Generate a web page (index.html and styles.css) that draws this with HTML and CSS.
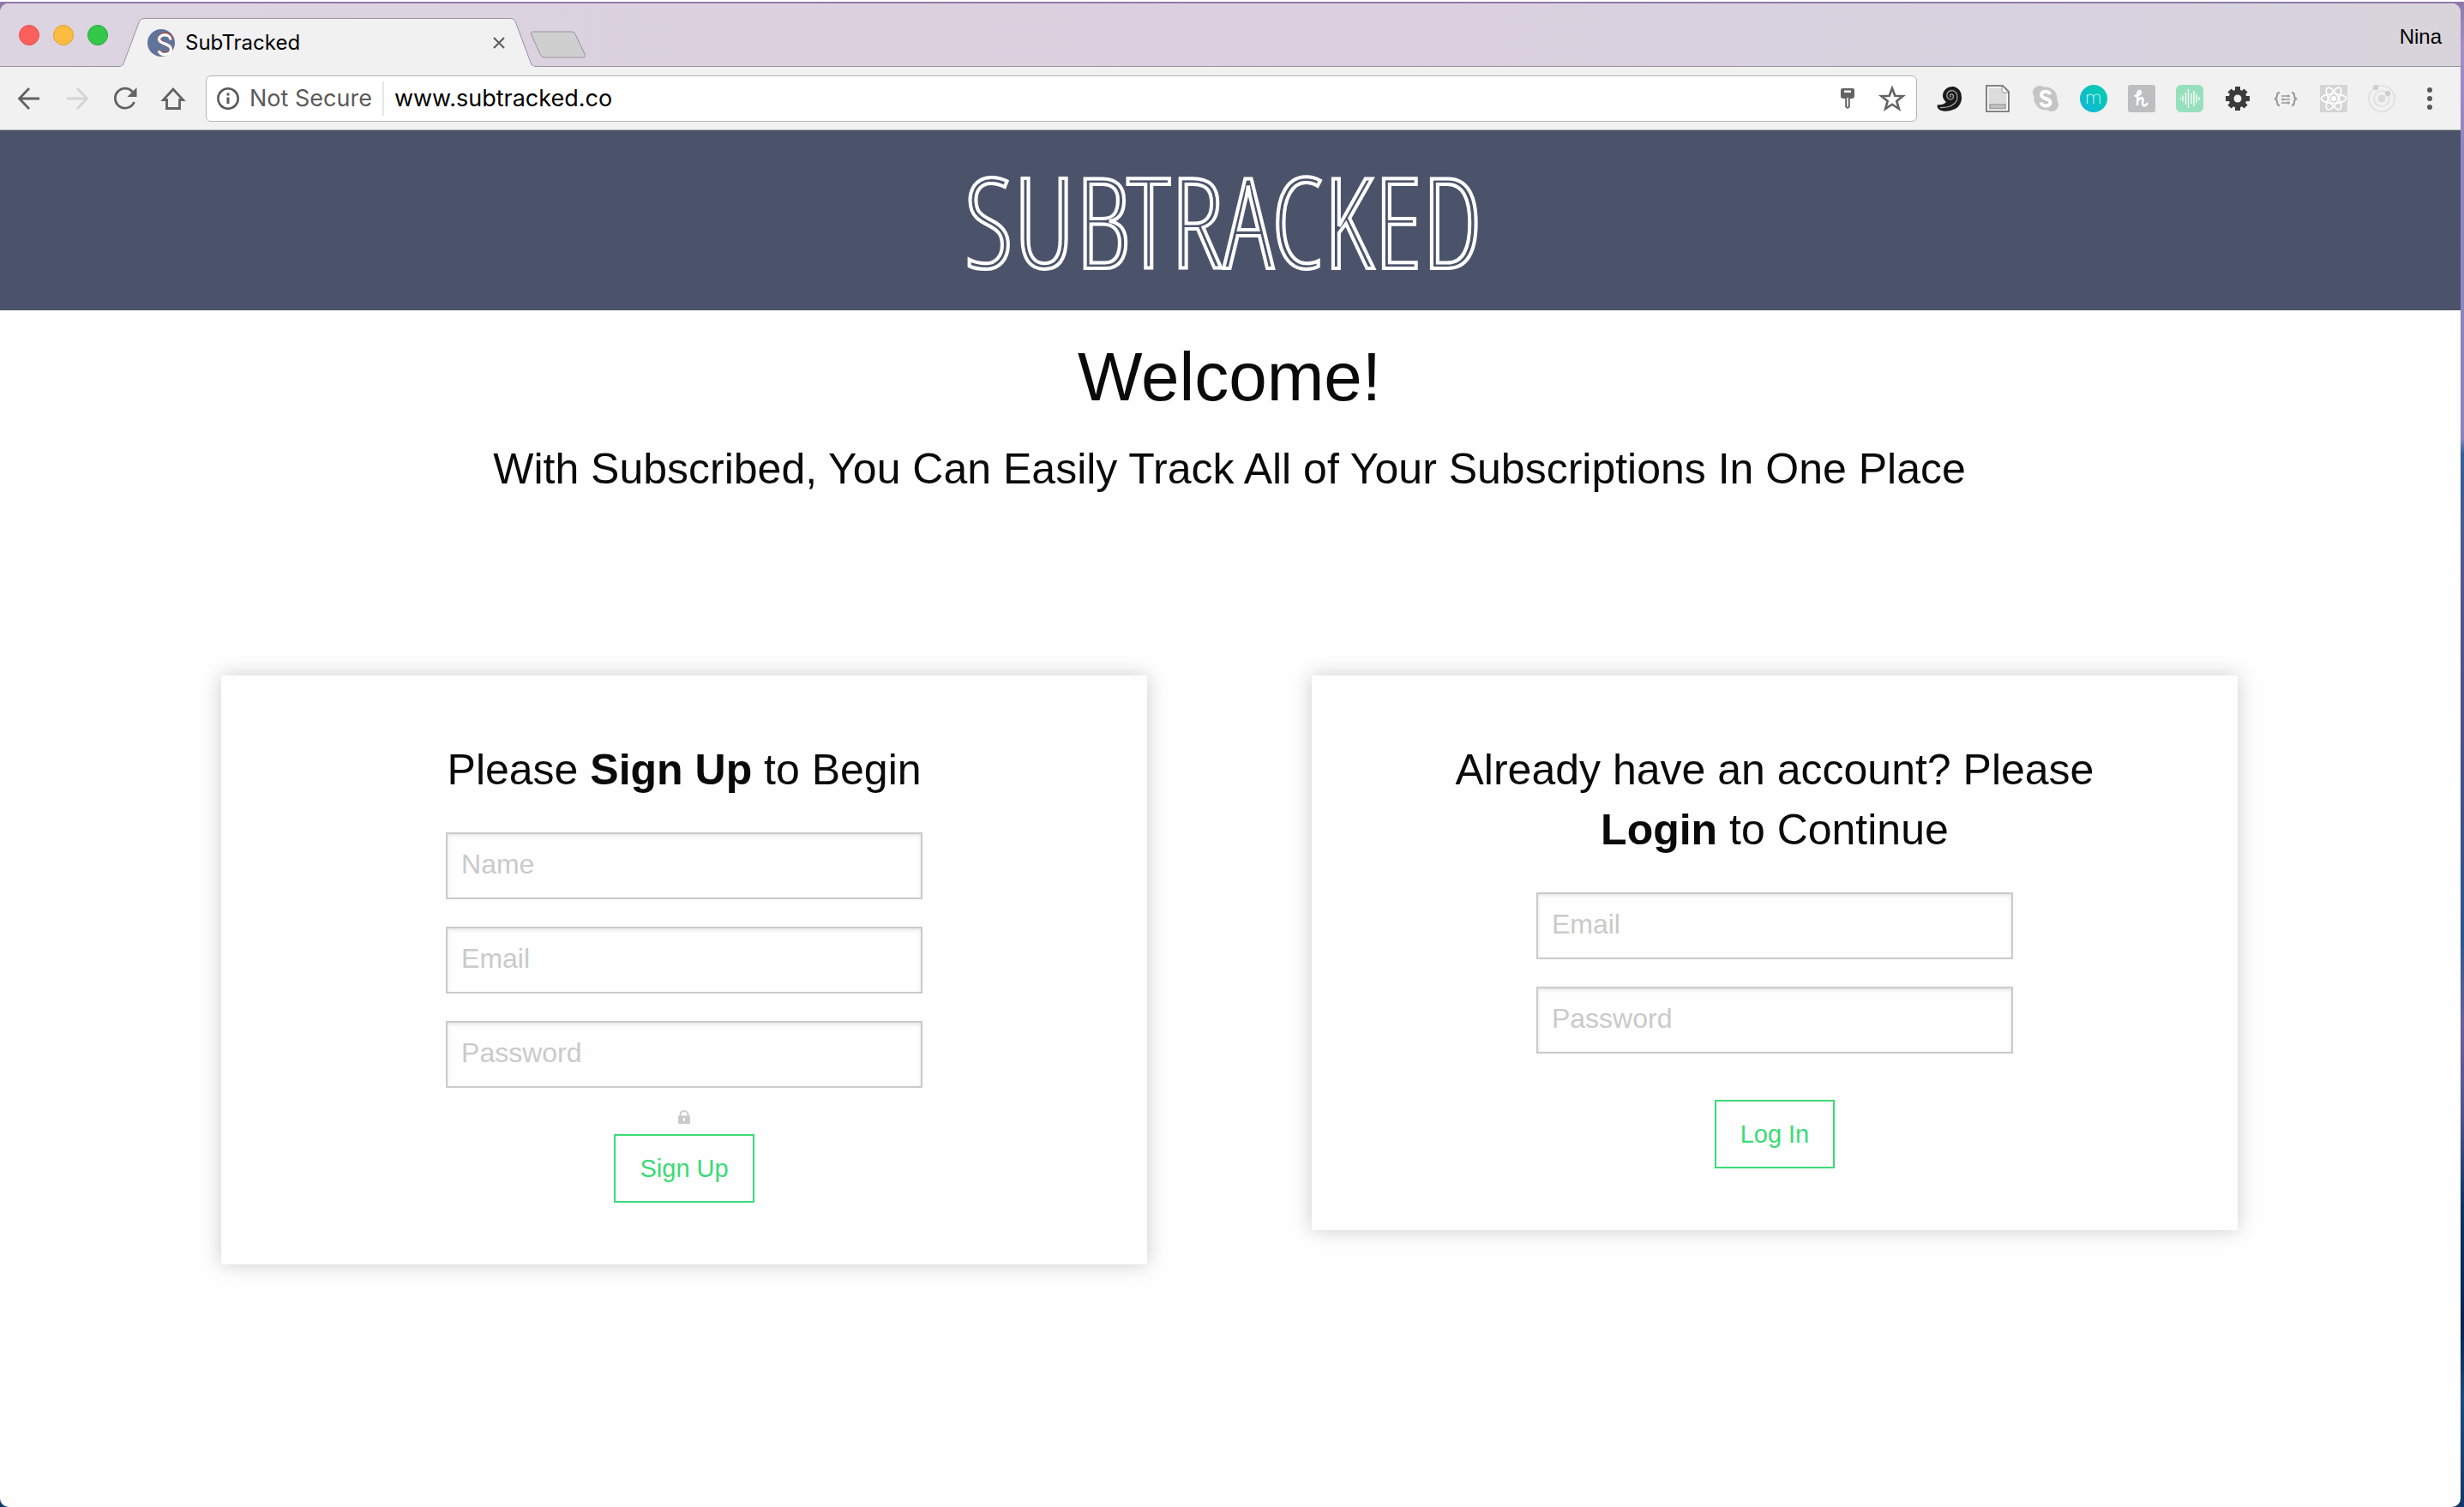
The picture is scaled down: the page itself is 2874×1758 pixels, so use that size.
FILE: index.html
```html
<!DOCTYPE html>
<html lang="en">
<head>
<meta charset="utf-8">
<title>SubTracked</title>
<link rel="stylesheet" href="styles.css">
</head>
<body>
<div class="desktop">
<div class="window">
  <div class="titlebar">
    <div class="lights"><span class="light red"></span><span class="light amber"></span><span class="light green"></span></div>
    <div class="tab">
      <svg class="tab-shape" viewBox="0 0 484 57"><path d="M0 56.500C3 56.500 3.500 55 4.500 52L22.500 4Q24 .5 28 .5H456Q459.500 .5 461 4L479 52C480 55 481 56.500 484 56.500V58H0Z" fill="#f1f1f1" stroke="#98919c"/><path d="M1 57h482" stroke="#f1f1f1" stroke-width="2"/></svg>
      <svg class="icon" viewBox="0 0 32 32"><circle cx="16" cy="16" r="16" fill="#60749a"/><path d="M28 12C28 3.500 14 3.500 14 11.500C14 17 27 17 27 23.500C27 30.500 13.500 30.500 13.500 24" fill="none" stroke="#a04a48" stroke-width="4"/><path d="M27 12.500C27 5 13.500 5 13.500 12C13.500 17.500 27.500 16.500 27.500 23.500C27.500 31.500 13.500 31 13.500 25" fill="none" stroke="#fff" stroke-width="3.400"/></svg>
      <span class="tab-title">SubTracked</span>
      <button class="plain" aria-label="Close tab"><svg class="close" viewBox="0 0 16 16"><path d="M2 2l12 12M14 2L2 14" stroke="#5a5a5a" stroke-width="2"/></svg></button>
    </div>
    <button class="plain new-tab" aria-label="New tab"><svg viewBox="0 0 66 32"><path d="M4 1H49Q52 1 53 4L64 27Q65.500 31 62 31H18Q14 31 12.500 28L1.500 4Q.5 1 4 1Z" fill="#cfcfcf" stroke="#98919c"/></svg></button>
    <span class="profile">Nina</span>
  </div>
  <div class="toolbar">
    <nav class="nav">
      <button class="plain" aria-label="Back"><svg class="icon" viewBox="0 0 32 32" fill="none" stroke="#636363" stroke-width="2.800"><path d="M28 16H5M16 4L4.500 16L16 28"/></svg></button>
      <button class="plain" aria-label="Forward"><svg class="icon" viewBox="0 0 32 32" fill="none" stroke="#d4d4d4" stroke-width="2.800"><path d="M4 16H27M16 4L27.500 16L16 28"/></svg></button>
      <button class="plain" aria-label="Reload"><svg class="icon" viewBox="0 0 32 32"><path d="M26.500 20A11.500 11.500 0 1 1 24.500 8" fill="none" stroke="#636363" stroke-width="2.800"/><path d="M29.500 3V14H18.500Z" fill="#636363"/></svg></button>
      <button class="plain" aria-label="Home"><svg class="icon" viewBox="0 0 32 32" fill="none" stroke="#636363" stroke-width="2.800"><path d="M16 5L4.500 17.500H8.500V27.500H23.500V17.500H27.500Z"/></svg></button>
    </nav>
    <div class="omnibox">
      <svg class="info" viewBox="0 0 26 26"><circle cx="13" cy="13" r="11.700" fill="none" stroke="#5a5a5a" stroke-width="2.600"/><path d="M13 11.500V19M13 6.500V9.500" stroke="#5a5a5a" stroke-width="3"/></svg>
      <span class="security">Not Secure</span>
      <input class="url" type="text" aria-label="Address" value="www.subtracked.co">
      <button class="plain" aria-label="Saved password"><svg class="icon" viewBox="0 0 32 32"><path d="M10 4H22Q24 4 24 6V13Q24 16 21 16H11Q8 16 8 13V6Q8 4 10 4Z" fill="#636363"/><path d="M12 6.500h8v2.500h-8z" fill="#fff"/><path d="M14.200 15V25.500Q16 28 17.800 25.500V15" fill="#fff" stroke="#636363" stroke-width="2"/></svg></button>
      <button class="plain" aria-label="Bookmark"><svg class="icon" viewBox="0 0 32 32"><path d="M16 4L19.300 12.800L28.500 13.100L21.300 18.900L23.900 28L16 22.700L8.100 28L10.700 18.900L3.500 13.100L12.700 12.800Z" fill="none" stroke="#636363" stroke-width="2.600"/></svg></button>
    </div>
    <div class="extensions">
      <svg class="icon" viewBox="0 0 32 32"><path d="M2 23Q8 24 12 20Q6 15 9 8Q13 1 21 2Q31 5 30 17Q28 28 17 30Q7 32 3 28Q1 26 2 23Z" fill="#1b1b1b"/><path d="M18 14Q16 14 16.500 12Q18.500 9.500 20.500 12.500Q20.500 17 16.500 17Q12 15.500 13 10.500Q15.500 5.500 21 7Q26.500 10.500 24.500 18Q20 27 5 26.500" fill="none" stroke="#b0b0b0" stroke-width="1.200"/></svg>
      <svg class="icon" viewBox="0 0 32 32"><path d="M3 1H22L29 8V31H3Z" fill="#fff" stroke="#828282" stroke-width="2"/><path d="M5.500 3.500H20V10H26.500V28.500H5.500Z" fill="#dcdcdc"/><path d="M21 2V9H28" fill="none" stroke="#828282"/><path d="M7 23H25V27.500H7Z" fill="#c4c4c4" stroke="#a0a0a0" stroke-width="1.500"/></svg>
      <svg class="icon" viewBox="0 0 32 32"><circle cx="16" cy="16" r="13.500" fill="#c5c5c5"/><circle cx="9" cy="9" r="8" fill="#c5c5c5"/><circle cx="23" cy="23" r="8" fill="#c5c5c5"/><path d="M21 11C20 6.500 11 6.500 11 11.500C11 17 21.500 15 21.500 20.500C21.500 26 11 25.500 10.500 20.500" fill="none" stroke="#fff" stroke-width="4"/></svg>
      <svg class="icon" viewBox="0 0 32 32"><defs><linearGradient id="teal" x1="0" y1="1" x2="1" y2="0"><stop offset="0" stop-color="#10b4dc"/><stop offset="1" stop-color="#06cfa8"/></linearGradient></defs><circle cx="16" cy="16" r="16" fill="url(#teal)"/><path d="M8.500 22V11M8.500 15Q9 11 12.500 11Q16 11 16 15V22M16 15Q16.500 11 20 11Q23.500 11 23.500 15V22" fill="none" stroke="#a9f0ee" stroke-width="1.200"/></svg>
      <svg class="icon" viewBox="0 0 32 32"><rect width="32" height="32" rx="3" fill="#bdbec0"/><path d="M7.500 13Q15 12 15 8.500Q14 5.500 11.500 8.500L11 24M11 19Q14 14.500 17 15.500Q18 17 17 21Q17 25 20 24Q22 23 23 21" fill="none" stroke="#fff" stroke-width="2.600"/></svg>
      <svg class="icon" viewBox="0 0 32 32"><rect width="32" height="32" rx="6" fill="#97e0bd"/><path d="M5.500 15V17M8 12.500V19.500M11.500 9V23M14.500 5V27M18 10V22M21 7V25M24 11V21M27 14V18" stroke="#fff" stroke-width="1.300"/></svg>
      <svg class="icon" viewBox="0 0 32 32"><g stroke="#3c3c3c" stroke-width="6"><path d="M16 2V30M2 16H30M6.500 6.500L25.500 25.500M25.500 6.500L6.500 25.500"/></g><circle cx="16" cy="16" r="10.500" fill="#3c3c3c"/><circle cx="16" cy="16" r="4.500" fill="#f1f1f1"/></svg>
      <svg class="icon" viewBox="0 0 32 32" fill="none" stroke="#999" stroke-width="2"><path d="M9 9Q6 9 6 12Q6 16 3 16Q6 17 6 20Q6 24 9 24M23 9Q26 9 26 12Q26 16 29 16Q26 17 26 20Q26 24 23 24"/><path d="M11 13H21M11 17H21M11 21H21" stroke-width="1.400"/><path d="M19 11.500V14.500M13 15.500V18.500M19 19.500V22.500" stroke-width="1.400"/></svg>
      <svg class="icon" viewBox="0 0 32 32"><rect width="32" height="32" fill="#d5d5d5"/><g fill="none" stroke="#fff" stroke-width="1.700"><ellipse cx="16" cy="16" rx="14.500" ry="5.500"/><ellipse cx="16" cy="16" rx="14.500" ry="5.500" transform="rotate(60 16 16)"/><ellipse cx="16" cy="16" rx="14.500" ry="5.500" transform="rotate(120 16 16)"/></g><circle cx="16" cy="16" r="3" fill="#fff"/></svg>
      <svg class="icon" viewBox="0 0 32 32"><g fill="none" stroke="#dfdfdf" stroke-width="1.700"><circle cx="16" cy="16" r="15"/><circle cx="16" cy="16" r="9"/></g><circle cx="16" cy="16" r="4.500" fill="#dadada"/><circle cx="9" cy="3" r="3.200" fill="#cfcfcf"/><circle cx="23" cy="10" r="3.200" fill="#cfcfcf"/></svg>
      <button class="plain" aria-label="Menu"><svg class="icon" viewBox="0 0 32 32" fill="#5a5a5a"><circle cx="16" cy="6" r="3"/><circle cx="16" cy="16" r="3"/><circle cx="16" cy="26" r="3"/></svg></button>
    </div>
  </div>
  <div class="page">
    <header class="brand"><span class="wordmark">SUBTRACKED</span></header>
    <main>
      <h1>Welcome!</h1>
      <h2>With Subscribed, You Can Easily Track All of Your Subscriptions In One Place</h2>
      <div class="panels">
        <form class="panel">
          <h2>Please <strong>Sign Up</strong> to Begin</h2>
          <div class="fields">
            <input type="text" placeholder="Name" aria-label="Name">
            <input type="email" placeholder="Email" aria-label="Email">
            <input type="password" placeholder="Password" aria-label="Password">
          </div>
          <div class="hint"><svg viewBox="0 0 16 16"><path d="M3.500 7V5.500A4.500 4.500 0 0 1 12.500 5.500V7" fill="none" stroke="#cbcbcb" stroke-width="2"/><rect x="1" y="6.500" width="14" height="9.500" rx="1" fill="#cbcbcb"/><path d="M8 9v4" stroke="#fdfdfd" stroke-width="2"/></svg></div>
          <button class="action" type="button">Sign Up</button>
        </form>
        <form class="panel">
          <h2>Already have an account? Please <strong>Login</strong> to Continue</h2>
          <div class="fields">
            <input type="email" placeholder="Email" aria-label="Email">
            <input type="password" placeholder="Password" aria-label="Password">
          </div>
          <div class="hint"></div>
          <button class="action" type="button">Log In</button>
        </form>
      </div>
    </main>
  </div>
</div>
</div>
</body>
</html>
```
FILE: styles.css
```css
* { box-sizing: border-box; }

body {
  margin: 0;
  background: #fff;
  font-family: "Liberation Sans", Arial, sans-serif;
  color: #0a0a0a;
}

.desktop {
  display: flex;
  min-height: calc(100vh - 2px);
  margin-top: 2px;
  padding: 2px 4px 0 0;
  background: linear-gradient(#8f78a8, #a68cc4 3%, #8f86bd 10%, #8a86bb 29%, #35609a 30%, #54578f 38%, #4a5088 50%, #2c5690 62%, #6a629a 68%, #4f548c 74%, #0c3464 80%, #082450 88%, #1e4a80 93%, #12386c);
}

.window {
  flex: 1;
  display: flex;
  flex-direction: column;
  overflow: hidden;
  border-radius: 10px;
  background: #fefefe;
}

.plain {
  display: flex;
  padding: 0;
  border: 0;
  background: none;
}

.icon {
  width: 32px;
  height: 32px;
  display: block;
  flex: none;
}

/* Browser chrome */
.titlebar {
  display: flex;
  align-items: center;
  height: 74px;
  padding: 0 22px;
  border-bottom: 1px solid #98919c;
  background: linear-gradient(90deg, #dcd4e0, #dbd0df 55%, #d7d4e0 90%, #d8d4da);
}

.lights { display: flex; gap: 16px; }

.light {
  width: 24px;
  height: 24px;
  border: 1px solid;
  border-radius: 50%;
}

.red { background: #fc605c; border-color: #e0504d; }
.amber { background: #fdbc40; border-color: #dea034; }
.green { background: #34c84a; border-color: #28a83a; }

.tab {
  position: relative;
  display: flex;
  align-items: center;
  align-self: flex-end;
  gap: 12px;
  width: 484px;
  height: 57px;
  margin: 0 0 -1px 14px;
  padding: 0 34px 0 32px;
  font: 24px/32px Inter, sans-serif;
  color: #000;
}

.tab > * { position: relative; }
.tab .tab-shape { position: absolute; inset: 0; width: 100%; height: 100%; }
.tab-title { flex: 1; }
.close { width: 16px; height: 16px; }
.new-tab { margin: 22px 0 0 -6px; }
.new-tab svg { width: 66px; height: 32px; }

.profile {
  margin-left: auto;
  padding-top: 4px;
  font-size: 24px;
  color: #000;
}

.toolbar {
  display: flex;
  align-items: center;
  gap: 22px;
  height: 74px;
  padding: 0 20px 0 18px;
  border-bottom: 1px solid #b0b6b4;
  background: #f1f1f1;
}

.nav, .extensions { display: flex; gap: 24px; }

.omnibox {
  flex: 1;
  display: flex;
  align-items: center;
  gap: 20px;
  height: 54px;
  padding: 0 12px;
  border: 1px solid #b4b4b4;
  border-radius: 6px;
  background: #fff;
  font: 27px/40px Inter, sans-serif;
}

.info { flex: none; width: 26px; height: 26px; }

.security {
  margin-left: -8px;
  padding-right: 12px;
  border-right: 2px solid #e6e6e6;
  color: #5a5a5a;
}

.url {
  flex: 1;
  min-width: 0;
  margin-left: -8px;
  padding: 0;
  border: 0;
  background: none;
  font: inherit;
  color: #000;
}

/* Page header */
.brand {
  display: flex;
  align-items: center;
  justify-content: center;
  height: 210px;
  padding-right: 16px;
  background: #4b536b;
}

.wordmark {
  font-family: "Open Sans Condensed Light", "Open Sans Condensed", "Roboto Condensed", sans-serif;
  font-size: 146px;
  font-weight: 300;
  line-height: 196px;
  color: #4b536b;
  -webkit-text-stroke: 4px #fff;
}

/* Page content */
h1, h2 { margin: 0; font-weight: 400; text-align: center; }
h1 { margin: 22px 0 16px; font-size: 80px; line-height: 112px; }
h2 { font-size: 50px; line-height: 70px; }

main { padding-right: 2px; }

.panels {
  display: grid;
  grid-template-columns: 1fr 1fr;
  align-items: start;
  gap: 192px;
  margin-top: 206px;
  padding: 0 9% 72px;
}

.panel {
  display: flex;
  flex-direction: column;
  align-items: center;
  padding: 75px 128px 72px;
  box-shadow: 0 0 22px rgba(0, 0, 0, 0.2);
}

.fields {
  display: grid;
  gap: 32px;
  width: 100%;
  max-width: 556px;
  margin-top: 38px;
}

.fields input {
  width: 100%;
  height: 78px;
  padding: 0 16px 4px;
  border: 2px solid #cacaca;
  border-radius: 0;
  background: #fefefe;
  box-shadow: inset 0 2px 4px rgba(10, 10, 10, 0.1);
  font: 32px/48px "Liberation Sans", Arial, sans-serif;
}

.fields input::placeholder { color: #cacaca; opacity: 1; }

.hint { height: 54px; padding-top: 26px; }
.hint svg { display: block; width: 16px; height: 16px; }

.action {
  height: 80px;
  padding: 0 28px;
  border: 2px solid #3adb76;
  background: none;
  color: #3adb76;
  font: 29px/40px "Liberation Sans", Arial, sans-serif;
}
```
